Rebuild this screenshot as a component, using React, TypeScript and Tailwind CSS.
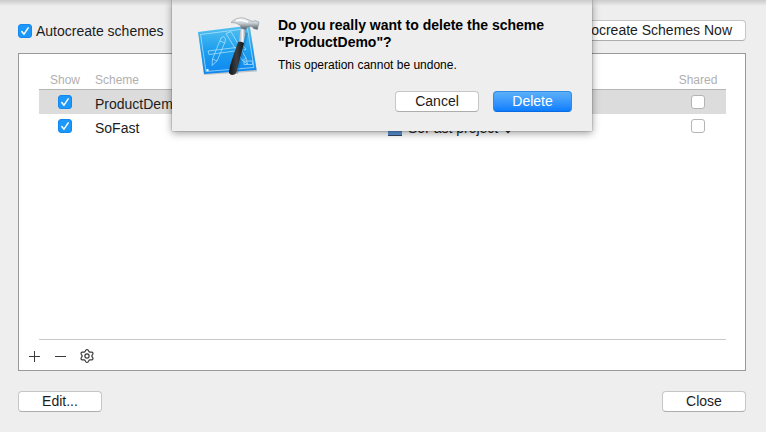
import { useState } from "react";
import type { ButtonHTMLAttributes, InputHTMLAttributes } from "react";
import clsx from "clsx";

function Checkbox({ className, ...props }: InputHTMLAttributes<HTMLInputElement>) {
  return (
    <span className={clsx("relative inline-flex size-3.5 shrink-0", className)}>
      <input
        type="checkbox"
        className="peer size-3.5 appearance-none rounded-[3px] border border-[#b4b4b4] bg-white checked:border-[#1587ee] checked:bg-[#1b98fa]"
        {...props}
      />
      <svg
        viewBox="0 0 14 14"
        className="pointer-events-none absolute inset-0 hidden size-3.5 peer-checked:block"
        fill="none"
        stroke="white"
        strokeWidth="1.5"
        strokeLinecap="round"
        strokeLinejoin="round"
        aria-hidden="true"
      >
        <path d="M3.8 7.600 L6 10.200 L10.200 3.800" />
      </svg>
    </span>
  );
}

function PushButton({ className, ...props }: ButtonHTMLAttributes<HTMLButtonElement>) {
  return (
    <button
      type="button"
      className={clsx(
        "h-[21px] rounded-[4px] border text-center text-[14px] leading-[19px] whitespace-nowrap",
        className,
      )}
      {...props}
    />
  );
}

const plain = "border-[#c6c6c6] border-b-[#adadad] bg-white text-[#1c1c1c]";

function ProjectIcon() {
  return (
    <svg viewBox="0 0 110 90" className="h-[90px] w-[110px]" aria-hidden="true">
      <defs>
        <linearGradient id="sheet" x1="0" y1="0" x2="0" y2="1">
          <stop offset="0" stopColor="#55c2f1" />
          <stop offset="0.5" stopColor="#1d9fee" />
          <stop offset="1" stopColor="#0f87f0" />
        </linearGradient>
        <linearGradient id="steel" x1="0" y1="0" x2="0" y2="1">
          <stop offset="0" stopColor="#eef1f3" />
          <stop offset="0.45" stopColor="#c9d0d5" />
          <stop offset="1" stopColor="#4d575f" />
        </linearGradient>
        <linearGradient id="neck" x1="0" y1="0" x2="1" y2="0">
          <stop offset="0" stopColor="#8f9ba4" />
          <stop offset="0.5" stopColor="#f4f6f8" />
          <stop offset="1" stopColor="#6d7880" />
        </linearGradient>
        <linearGradient id="grip" x1="0" y1="0" x2="1" y2="0">
          <stop offset="0" stopColor="#111314" />
          <stop offset="0.5" stopColor="#3c3f42" />
          <stop offset="1" stopColor="#151617" />
        </linearGradient>
      </defs>
      <path d="M18.500 33.500 L70 27 L77 71.500 L24 75 Z" fill="#000" opacity="0.18" />
      <path d="M18 32 L69.500 25.500 L76.500 70 L24 74 Z" fill="url(#sheet)" />
      <g fill="none" stroke="#c9edff" strokeWidth="0.8" strokeLinejoin="round" opacity="0.8">
        <path d="M20.500 34.500 L67.500 28.500 L74 67.500 L26 71.500 Z" />
        <path d="M28 51 L64 46.500 L66 49.500 L29 54.500 Z" />
        <path d="M41 38 Q44 35 45.500 39 L45 42 L37 61 L32 65.500 L32.500 59 Z M40 41 L45 43 M32.500 59 L37 61" />
        <path d="M46 33.500 L51 31.500 L66 58 L67.500 64 L62.500 60.500 Z M62.500 60.500 L66 58" />
        <path d="M64 61 H72.500 V64.500 H64 Z" />
      </g>
      <path d="M26.500 69 H28.500 V71 H26.500 Z" fill="white" />
      <path d="M65 32 L68 33 L58 74 L53 74 Z" fill="#044c8e" opacity="0.3" />
      <path d="M61 26 L66.500 27 L63.500 43.500 L58.500 42.500 Z" fill="url(#neck)" />
      <path
        d="M58 42 Q61 41 64 43 L56.500 72 Q55.500 75 52 75 Q48.500 74 49 71 Q50 65 52 59.500 Z"
        fill="url(#grip)"
      />
      <path
        d="M51 22.500 Q56 17 64 18 L70 20.500 L73 21.500 L75 20.500 L79 22 L77.500 29.500 L73.500 28.500 L72 26.500 L67.500 27 L66 29.500 L61 28.500 L60.500 25.500 Q56 22 51 22.500 Z"
        fill="url(#steel)"
        stroke="#7b868e"
        strokeWidth="0.5"
      />
      <path d="M56 20.700 Q61 19 68 22" stroke="white" strokeWidth="1.800" fill="none" />
    </svg>
  );
}

// Six rounded lobes, one of them pointing straight up.
const gearPath =
  Array.from({ length: 72 }, (_, i) => {
    const angle = (i / 72) * Math.PI * 2;
    const radius = 5.5 + 0.9 * Math.cos(6 * angle);
    const x = 7 + radius * Math.sin(angle) * 1.05;
    const y = 7 - radius * Math.cos(angle);
    return `${i === 0 ? "M" : "L"}${x.toFixed(2)} ${y.toFixed(2)}`;
  }).join(" ") + " Z";

const icon = "size-[14px] fill-none stroke-[#3a3a3a]";

export default function App() {
  const [rows, setRows] = useState([
    { name: "ProductDemo", container: "", show: true, shared: false },
    { name: "SoFast", container: "SoFast project", show: true, shared: false },
  ]);
  const toggle = (name: string, key: "show" | "shared") =>
    setRows(rows.map((r) => (r.name === name ? { ...r, [key]: !r[key] } : r)));

  return (
    <div className="relative flex min-h-screen flex-col bg-[#eeeeee] py-5 pr-5 pl-[18px] font-['Liberation_Sans',Arial,sans-serif] text-[14px] text-[#1c1c1c]">
      <header className="flex h-[21px] items-center justify-between">
        <label className="flex items-center gap-1 leading-5">
          <Checkbox defaultChecked />
          Autocreate schemes
        </label>
        <PushButton className={clsx("px-[13px]", plain)}>Autocreate Schemes Now</PushButton>
      </header>

      <main className="mt-3 flex flex-1 flex-col border border-[#999999] bg-white">
        <div className="mx-5 mr-[19px] flex-1 border-b border-[#c8c8c8]">
          <table className="w-full table-fixed border-collapse text-left">
            <thead>
              <tr className="h-[35px] border-b border-[#b5b5b5] align-bottom text-[12px] leading-4 text-[#b0b0b0]">
                <th className="w-[52px] pb-px text-center font-normal">Show</th>
                <th className="w-[297px] pb-px pl-1 font-normal">Scheme</th>
                <th className="pb-px font-normal">Container</th>
                <th className="w-14 pb-px text-center font-normal">Shared</th>
              </tr>
            </thead>
            <tbody>
              {rows.map((row, i) => (
                <tr key={row.name} className={clsx("h-6", i === 0 && "bg-[#dcdcdc]")}>
                  <td className="text-center">
                    <Checkbox
                      className="align-middle"
                      aria-label={`Show ${row.name}`}
                      checked={row.show}
                      onChange={() => toggle(row.name, "show")}
                    />
                  </td>
                  <td className="pt-1 pl-1 leading-5">{row.name}</td>
                  <td className="pt-1 leading-5">
                    {row.container && (
                      <span className="flex items-center gap-1.5">
                        <span className="h-4 w-3.5 border-b border-[#31465e] bg-[#5b93d8]" />
                        <span>{row.container}</span>
                        <svg viewBox="0 0 8 12" className="h-3 w-2 fill-none stroke-[#222222]" aria-hidden="true">
                          <path d="M1.500 4.500 L4 2 L6.500 4.500 M1.500 8 L4 10.500 L6.500 8" strokeWidth="1.3" />
                        </svg>
                      </span>
                    )}
                  </td>
                  <td className="text-center">
                    <Checkbox
                      className="align-middle"
                      aria-label={`Share ${row.name}`}
                      checked={row.shared}
                      onChange={() => toggle(row.name, "shared")}
                    />
                  </td>
                </tr>
              ))}
            </tbody>
          </table>
        </div>
        <div className="flex h-[30px] items-center gap-2.5 px-2 pt-0.5">
          <button type="button" aria-label="Add scheme" className="px-px">
            <svg viewBox="0 0 14 14" className={icon}>
              <path d="M1 7.500 H12 M6.500 2 V13" />
            </svg>
          </button>
          <button type="button" aria-label="Remove scheme" className="px-px">
            <svg viewBox="0 0 14 14" className={icon}>
              <path d="M1 7.500 H12" />
            </svg>
          </button>
          <button type="button" aria-label="Scheme actions" className="px-px">
            <svg viewBox="0 0 14 14" className={icon} strokeWidth="1.200" strokeLinejoin="round">
              <path d={gearPath} />
              <circle cx="7" cy="7" r="2.1" />
            </svg>
          </button>
        </div>
      </main>

      <footer className="mt-5 flex justify-between">
        <PushButton className={clsx("w-[84px]", plain)}>Edit...</PushButton>
        <PushButton className={clsx("w-[84px]", plain)}>Close</PushButton>
      </footer>

      <div className="pointer-events-none absolute inset-x-0 top-0 flex justify-center pr-5 pl-[18px]">
        <div
          role="alertdialog"
          aria-modal="true"
          aria-labelledby="alert-title"
          aria-describedby="alert-text"
          className="pointer-events-auto flex w-[420px] bg-[#eeeeee] pr-5 pb-[19px] text-black shadow-[0_2px_8px_rgba(0,0,0,0.4),0_0_1px_rgba(0,0,0,0.6)]"
        >
          <div className="w-[106px] shrink-0 pl-2">
            <ProjectIcon />
          </div>
          <div className="flex flex-1 flex-col pt-[17px]">
            <h1 id="alert-title" className="text-[14px] leading-[17px] font-bold">
              Do you really want to delete the scheme "ProductDemo"?
            </h1>
            <p id="alert-text" className="mt-1.5 text-[12px] leading-4">
              This operation cannot be undone.
            </p>
            <div className="mt-[18px] flex justify-end gap-3.5">
              <PushButton className={clsx("w-[84px]", plain)}>Cancel</PushButton>
              <PushButton className="w-[79px] border-[#2f8be6] border-b-[#0a6be0] bg-linear-to-b from-[#5ab0f7] to-[#0a7dff] text-white">
                Delete
              </PushButton>
            </div>
          </div>
        </div>
      </div>

      <div className="pointer-events-none absolute inset-x-0 top-0 h-1.5 bg-linear-to-b from-black/15 to-transparent" />
    </div>
  );
}
